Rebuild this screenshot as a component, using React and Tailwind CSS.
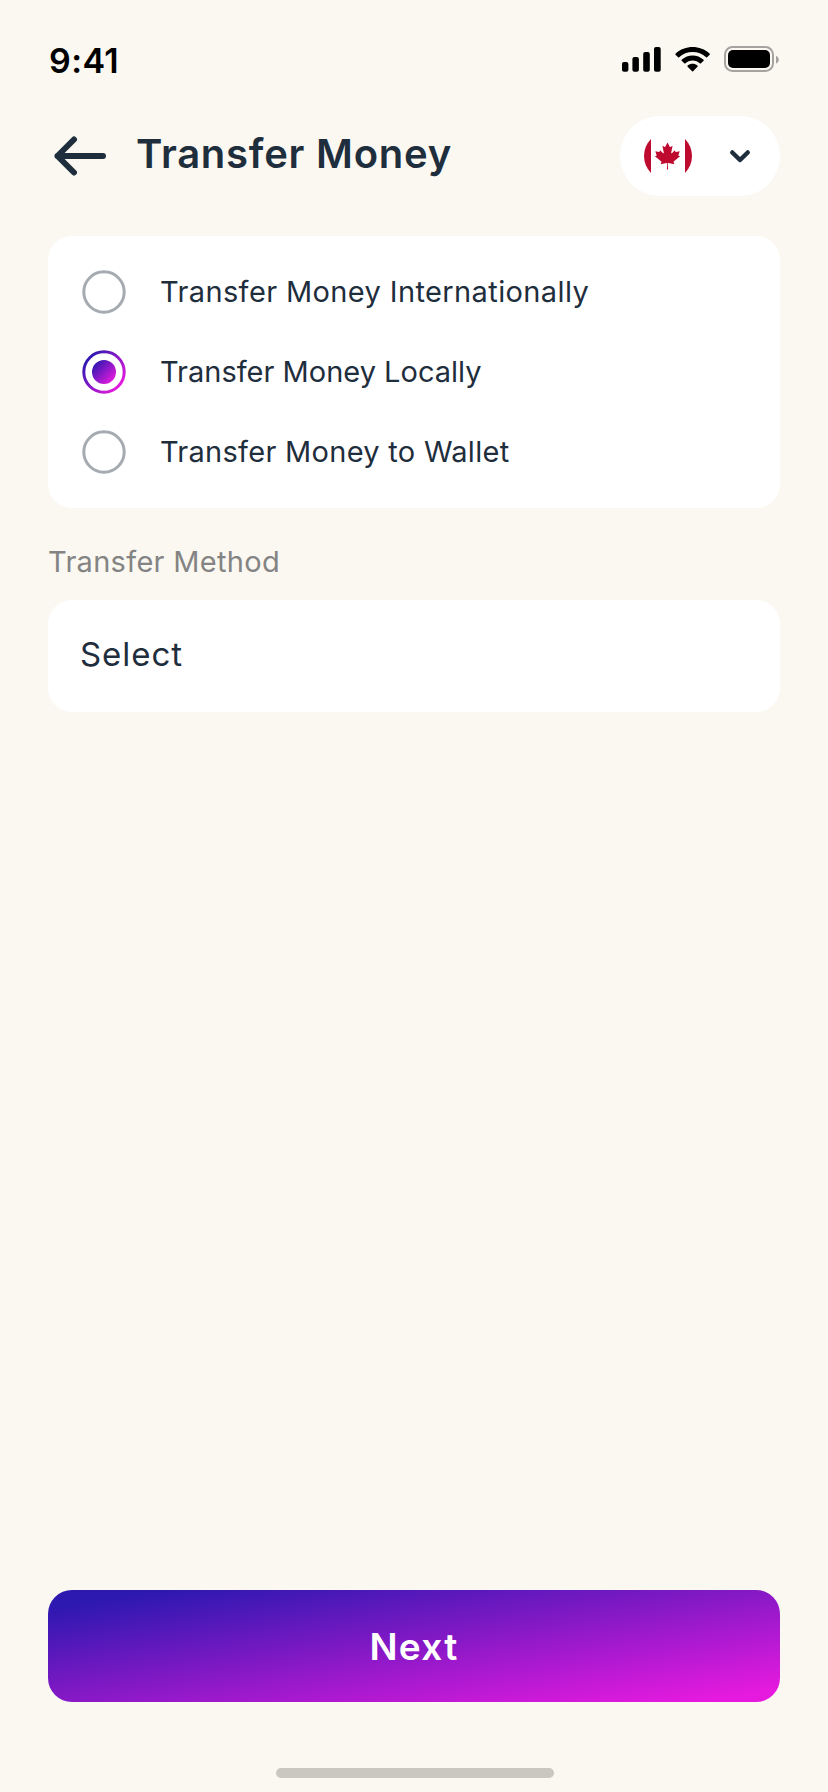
const options = [
  { label: "Transfer Money Internationally", checked: false, tracking: "tracking-[0.38px]" },
  { label: "Transfer Money Locally", checked: true, tracking: "tracking-[0px]" },
  { label: "Transfer Money to Wallet", checked: false, tracking: "tracking-[0.28px]" },
];

function StatusIcons() {
  return (
    <svg className="h-[28px] w-[158px]" viewBox="622 45 158 28" fill="none" aria-hidden="true">
      <g fill="#000">
        <rect x="622" y="62" width="6.4" height="9.8" rx="2" />
        <rect x="632.4" y="57" width="6.5" height="14.8" rx="2" />
        <rect x="643.2" y="52" width="6.6" height="19.8" rx="2" />
        <rect x="654" y="47" width="6.7" height="24.8" rx="2" />
        <g transform="translate(675.3 47) scale(2.02)">
          <path d="M8.5713 2.466C11.058 2.466 13.45 3.388 15.253 5.042C15.389 5.17 15.606 5.168 15.739 5.038L17.037 3.775C17.105 3.709 17.142 3.62 17.142 3.527C17.141 3.435 17.102 3.346 17.034 3.281C12.303 -1.094 4.839 -1.094 0.108 3.281C0.04 3.346 0 3.435 0 3.527C0 3.62 0.037 3.709 0.105 3.775L1.403 5.038C1.536 5.168 1.753 5.17 1.889 5.042C3.692 3.388 6.084 2.466 8.571 2.466Z" />
          <path d="M8.5713 6.687C9.93 6.687 11.238 7.195 12.242 8.112C12.378 8.242 12.592 8.239 12.725 8.106L14.012 6.798C14.08 6.73 14.117 6.637 14.116 6.541C14.115 6.446 14.076 6.355 14.007 6.288C10.944 3.446 6.2 3.446 3.137 6.288C3.068 6.355 3.028 6.446 3.027 6.542C3.026 6.637 3.064 6.73 3.131 6.798L4.418 8.106C4.551 8.239 4.765 8.242 4.901 8.112C5.905 7.196 7.212 6.687 8.571 6.687Z" />
          <path d="M11.092 9.48C11.094 9.582 11.055 9.68 10.984 9.751L8.803 12.004C8.739 12.07 8.652 12.107 8.561 12.107C8.471 12.107 8.384 12.07 8.32 12.004L6.101 9.751C6.033 9.68 5.995 9.582 5.997 9.48C5.999 9.379 6.041 9.282 6.113 9.215C7.535 7.953 9.578 7.953 10.976 9.215C11.048 9.283 11.09 9.379 11.092 9.48Z" />
        </g>
        <rect x="728" y="50" width="42" height="18" rx="5" />
      </g>
      <rect x="725" y="47" width="48" height="24" rx="7.5" stroke="#a5a39f" strokeWidth="2" />
      <path d="M776 55.8v7.8c1.7-.7 2.8-2.2 2.8-3.9s-1.100-3.200-2.800-3.900z" fill="#a5a39f" />
    </svg>
  );
}

function BackArrow() {
  return (
    <svg className="h-[40px] w-[56px] shrink-0" viewBox="52 136 56 40" fill="none" aria-hidden="true">
      <path d="M103 156H57.500M74 139.500L57.500 156L74 172.500" stroke="#1f2e3d" strokeWidth="6" strokeLinecap="round" strokeLinejoin="round" />
    </svg>
  );
}

function CanadaFlag() {
  return (
    <svg className="size-12" viewBox="0 0 48 48" aria-hidden="true">
      <clipPath id="disc">
        <circle cx="24" cy="24" r="24" />
      </clipPath>
      <g fill="#bf0a30">
        <path clipPath="url(#disc)" d="M0 7h7v34H0zM41 7h7v34h-7z" />
        <path
          transform="translate(23.5 23.9) scale(0.00675)"
          d="m-90 2030 45-863a95 95 0 0 0-111-98l-859 151 116-320a65 65 0 0 0-20-73l-941-762 212-99a65 65 0 0 0 34-79l-186-572 542 115a65 65 0 0 0 73-38l105-247 423 454a65 65 0 0 0 111-57l-204-1052 327 189a65 65 0 0 0 91-27l332-652 332 652a65 65 0 0 0 91 27l327-189-204 1052a65 65 0 0 0 111 57l423-454 105 247a65 65 0 0 0 73 38l542-115-186 572a65 65 0 0 0 34 79l212 99-941 762a65 65 0 0 0-20 73l116 320-859-151a95 95 0 0 0-111 98l45 863z"
        />
      </g>
    </svg>
  );
}

function Radio({ checked }) {
  return (
    <svg className="size-12 shrink-0" viewBox="0 0 48 48" fill="none" aria-hidden="true">
      <defs>
        <linearGradient id="ring" x1="5" y1="9" x2="41" y2="41" gradientUnits="userSpaceOnUse">
          <stop offset="0.05" stopColor="#2d18b0" />
          <stop offset="0.95" stopColor="#e51ade" />
        </linearGradient>
        <linearGradient id="dot" x1="13" y1="14" x2="34" y2="34" gradientUnits="userSpaceOnUse">
          <stop offset="0.05" stopColor="#2d18b0" />
          <stop offset="0.95" stopColor="#e51ade" />
        </linearGradient>
      </defs>
      <circle cx="24" cy="24" r="20.2" stroke={checked ? "url(#ring)" : "#a5abb1"} strokeWidth="3" />
      {checked && <circle cx="24" cy="24" r="12" fill="url(#dot)" />}
    </svg>
  );
}

export default function App() {
  return (
    <div className="flex h-[1792px] w-[828px] flex-col bg-[#fbf8f1] px-12 font-['Inter','Liberation_Sans',sans-serif] text-[#1f2e3d]">
      <div className="flex h-[116px] shrink-0 items-start justify-between pt-[45px]">
        <span className="pl-px text-[34px] leading-[32px] font-semibold tracking-[0.4px] text-black">9:41</span>
        <StatusIcons />
      </div>

      <header className="flex h-20 shrink-0 items-center pl-1">
        <BackArrow />
        <h1 className="ml-7 flex-1 pb-1 text-[40px] leading-[48px] font-semibold tracking-[0.75px] whitespace-nowrap">Transfer Money</h1>
        <button className="flex h-20 w-40 items-center justify-between rounded-full bg-white pr-7 pl-6">
          <CanadaFlag />
          <svg className="size-6" viewBox="0 0 24 24" fill="none" aria-hidden="true">
            <path d="M4.300 8.500L12 16L19.700 8.500" stroke="#1f2e3d" strokeWidth="4.500" strokeLinecap="round" strokeLinejoin="round" />
          </svg>
        </button>
      </header>

      <section className="mt-10 shrink-0 rounded-3xl bg-white px-8 py-4">
        {options.map((o) => (
          <div key={o.label} className="flex h-20 items-center gap-8">
            <Radio checked={o.checked} />
            <span className={"text-[29px] leading-[36px] whitespace-nowrap " + o.tracking}>{o.label}</span>
          </div>
        ))}
      </section>

      <label className="mt-9 block shrink-0 text-[29px] leading-[36px] tracking-[0.3px] whitespace-nowrap text-[#848484]">Transfer Method</label>
      <div className="mt-5 flex h-28 shrink-0 items-center rounded-3xl bg-white px-8">
        <span className="pb-1 text-[33px] leading-[40px] tracking-[0.95px]">Select</span>
      </div>

      <button className="mt-auto flex h-28 shrink-0 items-center justify-center rounded-3xl bg-[linear-gradient(to_bottom_right,#2d18b0_8%,#e51ade_94%)] pt-0.5 text-[37px] leading-[44px] font-semibold tracking-[1.3px] text-white">
        Next
      </button>
      <div className="mt-[66px] mb-3.5 ml-0.5 h-2.5 w-[278px] shrink-0 self-center rounded-full bg-[#cac6c0]" />
    </div>
  );
}
